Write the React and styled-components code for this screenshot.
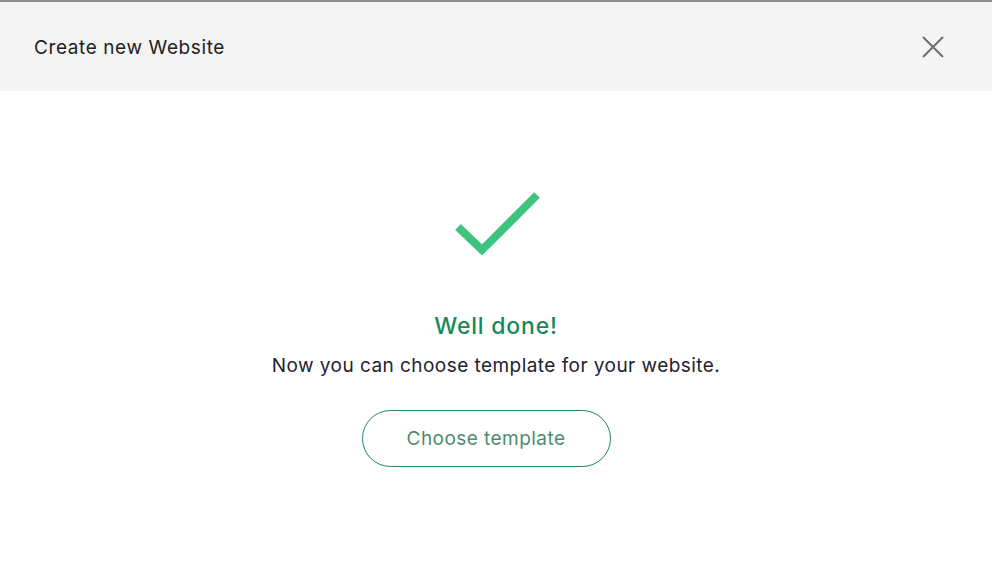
import styled, { createGlobalStyle } from "styled-components";

const GlobalStyle = createGlobalStyle`
  html, body {
    margin: 0;
    padding: 0;
    background: #ffffff;
    font-family: Inter, "Noto Sans", sans-serif;
  }
`;

const Modal = styled.div`
  width: 992px;
  height: 561px;
  border-top: 2px solid #8c8c8c;
  box-sizing: border-box;
  background: #ffffff;
`;

const Header = styled.header`
  height: 89px;
  background: #f4f4f4;
  display: flex;
  align-items: center;
  justify-content: space-between;
  padding: 0 46px 0 34px;
`;

const Title = styled.h1`
  margin: 0;
  font-size: 19px;
  letter-spacing: 0.6px;
  font-weight: 400;
  line-height: 26px;
  padding-top: 2px;
  color: #222222;
`;

const CloseButton = styled.button`
  border: none;
  background: none;
  padding: 0;
  width: 26px;
  height: 26px;
  display: flex;
  align-items: center;
  justify-content: center;
  cursor: pointer;
`;

const Body = styled.main`
  display: flex;
  flex-direction: column;
  align-items: center;
  padding-top: 99px;
`;

const CheckWrap = styled.div`
  margin-left: 4px;
  display: flex;
`;

const Heading = styled.h2`
  margin: 56px 0 0;
  font-size: 23px;
  letter-spacing: 0.8px;
  font-weight: 500;
  line-height: 28px;
  color: #178a5a;
`;

const Message = styled.p`
  margin: 13px 0 0;
  font-size: 19px;
  letter-spacing: 0.45px;
  line-height: 26px;
  color: #1e2230;
`;

const TemplateButton = styled.button`
  margin: 31px 20px 0 0;
  width: 249px;
  height: 57px;
  border: 1px solid #1f8a5c;
  border-radius: 29px;
  background: #ffffff;
  font-family: Inter, "Noto Sans", sans-serif;
  font-size: 19px;
  font-weight: 400;
  letter-spacing: 0.45px;
  color: #4d8c6e;
  cursor: pointer;
`;

function CheckIcon() {
  return (
    <svg width="86" height="66" viewBox="0 0 86 66">
      <path
        d="M3 37 L27 60 L82 5"
        fill="none"
        stroke="#3dc47e"
        strokeWidth="8"
      />
    </svg>
  );
}

export default function App() {
  return (
    <>
      <GlobalStyle />
      <Modal>
        <Header>
          <Title>Create new Website</Title>
          <CloseButton aria-label="Close">
            <svg width="22" height="22" viewBox="0 0 22 22">
              <path
                d="M1 1 L21 21 M21 1 L1 21"
                stroke="#6e6e6e"
                strokeWidth="2"
                fill="none"
              />
            </svg>
          </CloseButton>
        </Header>
        <Body>
          <CheckWrap>
            <CheckIcon />
          </CheckWrap>
          <Heading>Well done!</Heading>
          <Message>Now you can choose template for your website.</Message>
          <TemplateButton>Choose template</TemplateButton>
        </Body>
      </Modal>
    </>
  );
}
